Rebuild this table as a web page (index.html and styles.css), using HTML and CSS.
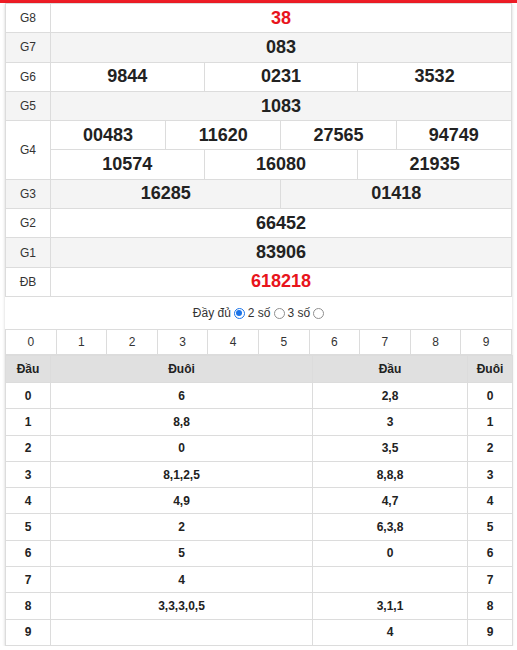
FILE: index.html
```html
<!DOCTYPE html>
<html lang="vi">
<head>
<meta charset="utf-8">
<link rel="stylesheet" href="styles.css">
</head>
<body>
<div class="topbar"></div>
<div class="box">
  <table class="prize">
    <colgroup>
      <col class="c-label">
      <col><col><col><col><col><col><col><col><col><col><col><col>
    </colgroup>
    <tr><td class="lbl">G8</td><td colspan="12" class="num red">38</td></tr>
    <tr class="alt"><td class="lbl">G7</td><td colspan="12" class="num">083</td></tr>
    <tr><td class="lbl">G6</td><td colspan="4" class="num">9844</td><td colspan="4" class="num">0231</td><td colspan="4" class="num">3532</td></tr>
    <tr class="alt"><td class="lbl">G5</td><td colspan="12" class="num">1083</td></tr>
    <tr><td class="lbl" rowspan="2">G4</td><td colspan="3" class="num">00483</td><td colspan="3" class="num">11620</td><td colspan="3" class="num">27565</td><td colspan="3" class="num">94749</td></tr>
    <tr><td colspan="4" class="num">10574</td><td colspan="4" class="num">16080</td><td colspan="4" class="num">21935</td></tr>
    <tr class="alt"><td class="lbl">G3</td><td colspan="6" class="num">16285</td><td colspan="6" class="num">01418</td></tr>
    <tr><td class="lbl">G2</td><td colspan="12" class="num">66452</td></tr>
    <tr class="alt"><td class="lbl">G1</td><td colspan="12" class="num">83906</td></tr>
    <tr><td class="lbl">ĐB</td><td colspan="12" class="num red">618218</td></tr>
  </table>

  <div class="options">
    <label class="opt">Đầy đủ <span class="radio checked"></span></label>
    <label class="opt">2 số <span class="radio"></span></label>
    <label class="opt">3 số <span class="radio"></span></label>
  </div>

  <table class="digits">
    <tr><td>0</td><td>1</td><td>2</td><td>3</td><td>4</td><td>5</td><td>6</td><td>7</td><td>8</td><td>9</td></tr>
  </table>

  <table class="loto">
    <colgroup><col class="w1"><col class="w2"><col class="w3"><col class="w4"></colgroup>
    <tr class="head"><th>Đầu</th><th>Đuôi</th><th>Đầu</th><th>Đuôi</th></tr>
    <tr><td>0</td><td>6</td><td>2,8</td><td>0</td></tr>
    <tr><td>1</td><td>8,8</td><td>3</td><td>1</td></tr>
    <tr><td>2</td><td>0</td><td>3,5</td><td>2</td></tr>
    <tr><td>3</td><td>8,1,2,5</td><td>8,8,8</td><td>3</td></tr>
    <tr><td>4</td><td>4,9</td><td>4,7</td><td>4</td></tr>
    <tr><td>5</td><td>2</td><td>6,3,8</td><td>5</td></tr>
    <tr><td>6</td><td>5</td><td>0</td><td>6</td></tr>
    <tr><td>7</td><td>4</td><td></td><td>7</td></tr>
    <tr><td>8</td><td>3,3,3,0,5</td><td>3,1,1</td><td>8</td></tr>
    <tr><td>9</td><td></td><td>4</td><td>9</td></tr>
  </table>
</div>
</body>
</html>
```
FILE: styles.css
```css
* { box-sizing: border-box; }
html, body { margin: 0; padding: 0; background: #fff; }
body {
  font-family: Arial, "Liberation Sans", Helvetica, sans-serif;
  color: #222;
}
.topbar { height: 3px; background: #ee1c25; }
.box {
  margin: 0 5px;
  box-shadow: 0 1px 3px rgba(0,0,0,0.18);
  background: #fff;
}
table {
  width: 100%;
  border-collapse: collapse;
  table-layout: fixed;
}
td, th {
  border: 1px solid #dcdcdc;
  padding: 0;
  text-align: center;
  vertical-align: middle;
}
.prize td { height: 29.3px; }
.prize .c-label { width: 45px; }
.prize tr.alt td { background: #f4f4f4; }
.lbl { font-size: 12px; color: #333; }
.num { font-size: 18px; font-weight: bold; color: #222; }
.num.red { color: #e8141c; }

.options {
  height: 32px;
  display: flex;
  justify-content: center;
  align-items: center;
  gap: 3px;
  font-size: 12px;
  color: #333;
  padding-top: 1px;
}
.opt { display: inline-flex; align-items: center; gap: 3px; }
.radio {
  width: 11px; height: 11px;
  border-radius: 50%;
  border: 1px solid #8f8f8f;
  background: #fff;
  display: inline-block;
  position: relative;
}
.radio.checked {
  border: 1px solid #1a73e8;
  background: #fff;
}
.radio.checked::after {
  content: "";
  position: absolute;
  left: 1.5px; top: 1.5px;
  width: 6px; height: 6px;
  border-radius: 50%;
  background: #1a73e8;
}
.digits td { height: 25px; font-size: 12px; color: #333; }
.loto .w1 { width: 45px; }
.loto .w2 { width: 262px; }
.loto .w3 { width: 155px; }
.loto .w4 { width: 45px; }
.loto tr.head th { background: #e0e0e0; height: 27px; font-size: 12px; font-weight: bold; color: #222; }
.loto td { height: 26.3px; font-size: 12px; font-weight: bold; color: #222; }
```
